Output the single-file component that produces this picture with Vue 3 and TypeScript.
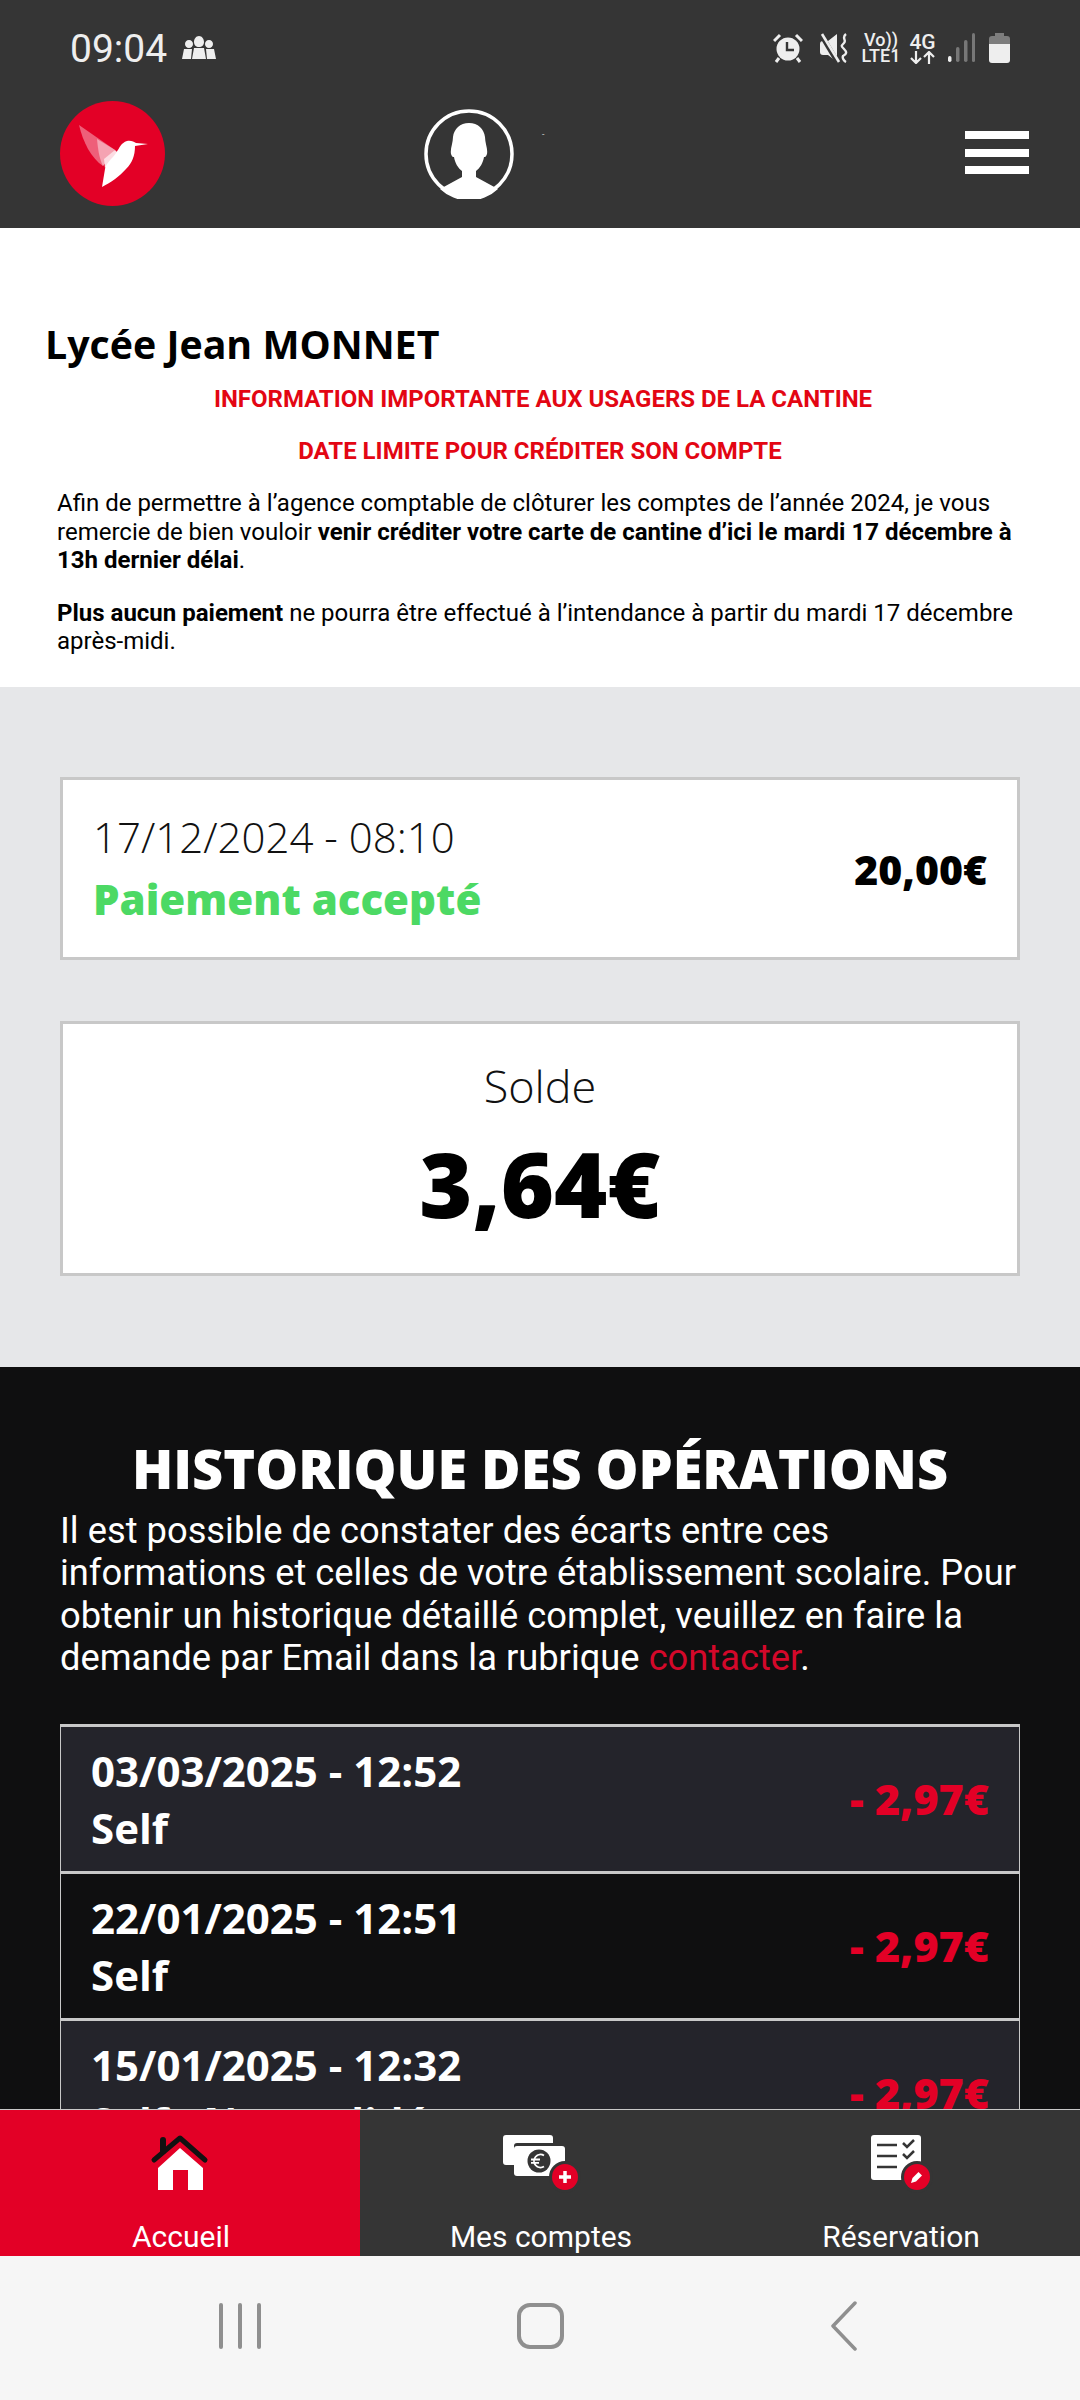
<script setup lang="ts">
const operations = [
  { date: '03/03/2025 - 12:52', label: 'Self', amount: '- 2,97€' },
  { date: '22/01/2025 - 12:51', label: 'Self', amount: '- 2,97€' },
  { date: '15/01/2025 - 12:32', label: 'Self - Non validé', amount: '- 2,97€' },
]
</script>

<template>
  <div class="screen">
    <header class="top">
      <div class="status">
        <div class="status-left">
          <span class="clock">09:04</span>
          <svg viewBox="0 0 36 24" width="36" height="24">
            <path d="M18 0c3 0 5 3 5 6s-2 5-5 5-5-2-5-5 2-6 5-6zM8 4c2.500 0 4 2 4 4s-1.500 4-4 4-4-2-4-4 1.500-4 4-4zM28 4c2.500 0 4 2 4 4s-1.500 4-4 4-4-2-4-4 1.500-4 4-4z" fill="#eee" />
            <path d="M13 12h10l2 11H11zM3 13h8l-1 10H1zM25 13h8l2 10h-9z" fill="#eee" />
          </svg>
        </div>
        <div class="status-right">
          <svg viewBox="0 0 30 30" width="30" height="30">
            <circle cx="15" cy="16" r="11.500" fill="#eee" />
            <path d="M14 9v8h7" fill="none" stroke="#353535" stroke-width="2.400" />
            <path d="M1 8l6-6M29 8l-6-6M6 25l-3 4M24 25l3 4" stroke="#eee" stroke-width="3" />
          </svg>
          <svg class="mute" viewBox="0 0 28 30" width="28" height="30">
            <path d="M0 11c0-2 1-3 3-3h5l9-7v28l-9-7H3c-2 0-3-1-3-3z" fill="#eee" />
            <path d="M0 0l18 30" stroke="#353535" stroke-width="5" />
            <path d="M2 1l17 28" stroke="#eee" stroke-width="2.600" />
            <path d="M26 1c-5 4 1 6-2 9s-3 3 0 6 3 5-1 7c-1 2 1 5 3 6" fill="none" stroke="#eee" stroke-width="2.400" />
          </svg>
          <div class="net">
            <span>Vo))</span>
            <span>LTE1</span>
          </div>
          <div class="net net-4g">
            <span>4G</span>
            <svg viewBox="0 0 25 13" width="25" height="13">
              <path d="M6 0v12M1 7l5 5 5-5M19 13V1M14 6l5-5 5 5" fill="none" stroke="#eee" stroke-width="2.200" />
            </svg>
          </div>
          <svg class="signal" viewBox="0 0 28 30" width="28" height="30">
            <rect x="1" y="23" width="3.500" height="6" rx="1.700" fill="#eee" />
            <rect x="9" y="14" width="3.500" height="15" rx="1.700" fill="#777" />
            <rect x="17" y="7" width="3.500" height="22" rx="1.700" fill="#777" />
            <rect x="25" y="0" width="3" height="29" rx="1.500" fill="#777" />
          </svg>
          <svg viewBox="0 0 21 30" width="21" height="30">
            <path d="M6 0h9v3h3a3 3 0 0 1 3 3v5H0V6a3 3 0 0 1 3-3h3z" fill="#7d7d7d" />
            <path d="M0 11h21v16a3 3 0 0 1-3 3H3a3 3 0 0 1-3-3z" fill="#eee" />
          </svg>
        </div>
      </div>

      <div class="brand-row">
        <svg class="logo" viewBox="0 0 105 105" width="105" height="105">
          <circle cx="52.500" cy="52.500" r="52.500" fill="#e30026" />
          <path d="M19 24l36 25-12 16C31 57 23 41 19 24z" fill="#ee5f79" />
          <path d="M37 38l18 11-12 16c-4-8-5-17-6-27z" fill="#f5a3b2" />
          <path d="M44 58l11-9 4 4-14 14z" fill="#fcdde3" />
          <path d="M42 86l3-18c1-6 7-10 11-16 4-6 5-10 11-12 4-1 7 1 9 2l12 1-13 2c0 10-3 17-9 23-6 7-16 14-24 18z" fill="#fff" />
        </svg>
        <div class="user">
          <svg class="avatar" viewBox="0 0 90 90" width="90" height="90">
            <circle cx="45" cy="45" r="43" fill="#353535" stroke="#fff" stroke-width="3.500" />
            <path d="M45 14c-9 0-15 6-16 14 0 6-3 12-2 17 1 3 2 3 3 3 1 6 4 11 8 14v6L16 80a42 42 0 0 0 58 0L52 68v-6c4-3 7-8 8-14 1 0 2 0 3-3 1-5-2-11-2-17-1-8-7-14-16-14z" fill="#fff" />
          </svg>
          <span class="user-dot">-</span>
        </div>
        <button class="burger" type="button" aria-label="Menu">
          <span></span>
          <span></span>
          <span></span>
        </button>
      </div>
    </header>

    <main class="scroll">
      <section class="notice">
        <h1>Lycée Jean MONNET</h1>
        <p class="alert">INFORMATION IMPORTANTE AUX USAGERS DE LA CANTINE</p>
        <p class="alert">DATE LIMITE POUR CRÉDITER SON COMPTE</p>
        <p class="body-text">
          Afin de permettre à l’agence comptable de clôturer les comptes de l’année 2024, je vous
          remercie de bien vouloir
          <strong>venir créditer votre carte de cantine d’ici le mardi 17 décembre à 13h dernier délai</strong>.
        </p>
        <p class="body-text">
          <strong>Plus aucun paiement</strong> ne pourra être effectué à l’intendance à partir du
          mardi 17 décembre après-midi.
        </p>
      </section>

      <section class="account">
        <div class="card payment">
          <div>
            <div class="pay-date">17/12/2024 - 08:10</div>
            <div class="pay-status">Paiement accepté</div>
          </div>
          <div class="pay-amount">20,00€</div>
        </div>
        <div class="card balance">
          <div class="balance-label">Solde</div>
          <div class="balance-value">3,64€</div>
        </div>
      </section>

      <section class="history">
        <h2>HISTORIQUE DES OPÉRATIONS</h2>
        <p class="history-text">
          Il est possible de constater des écarts entre ces informations et celles de votre
          établissement scolaire. Pour obtenir un historique détaillé complet, veuillez en faire la
          demande par Email dans la rubrique <span class="link">contacter</span>.
        </p>
        <div class="ops">
          <div v-for="op in operations" :key="op.date" class="op">
            <div class="op-main">
              <div>{{ op.date }}</div>
              <div>{{ op.label }}</div>
            </div>
            <div class="op-amount">{{ op.amount }}</div>
          </div>
        </div>
      </section>
    </main>

    <nav class="tabs">
      <div class="tab active">
        <svg viewBox="0 0 64 60" width="64" height="60">
          <path d="M10 57V35L32 15l23 20v22H40V37H25v20z" fill="#fff" />
          <path d="M6 27L32 5l25 22" fill="none" stroke="#111" stroke-width="5" stroke-linecap="round" stroke-linejoin="round" />
          <path d="M15 7v11" stroke="#111" stroke-width="6" stroke-linecap="round" />
        </svg>
        <span>Accueil</span>
      </div>
      <div class="tab">
        <svg class="icon-money" viewBox="0 0 78 60" width="78" height="60">
          <path d="M3 2h44a3 3 0 0 1 3 3v5H14a3 3 0 0 0-3 3v19H3a3 3 0 0 1-3-3V5a3 3 0 0 1 3-3z" fill="#fff" />
          <rect x="11" y="13" width="51" height="30" rx="3" fill="#fff" />
          <circle cx="36" cy="28" r="11.500" fill="#353535" />
          <path d="M41 22.500a6.500 6.500 0 1 0 0 11M28 26.500h9M28 29.800h8" fill="none" stroke="#fff" stroke-width="1.800" />
          <circle cx="62" cy="44" r="16" fill="#353535" />
          <circle cx="62" cy="44" r="13" fill="#e30026" />
          <path d="M62 38v12M56 44h12" stroke="#fff" stroke-width="3.500" />
        </svg>
        <span>Mes comptes</span>
      </div>
      <div class="tab">
        <svg class="icon-booking" viewBox="0 0 62 60" width="62" height="60">
          <rect x="0" y="2" width="50" height="45" rx="3" fill="#fff" />
          <path d="M6 12h20M6 23h20M6 34h20" stroke="#353535" stroke-width="2.500" />
          <path d="M32 10l4 4 7-7M32 21l4 4 7-7" fill="none" stroke="#353535" stroke-width="2.500" />
          <circle cx="46" cy="44" r="16" fill="#353535" />
          <circle cx="46" cy="44" r="13" fill="#e30026" />
          <path d="M40 50l1.500-5 6-6 3.500 3.500-6 6z" fill="#fff" />
        </svg>
        <span>Réservation</span>
      </div>
    </nav>

    <footer class="android">
      <div class="recents">
        <span></span>
        <span></span>
        <span></span>
      </div>
      <div class="home"></div>
      <svg class="back" viewBox="0 0 28 50" width="28" height="50">
        <path d="M25 2L3 25l22 23" fill="none" stroke="#8f8f8f" stroke-width="3.500" stroke-linecap="round" stroke-linejoin="round" />
      </svg>
    </footer>
  </div>
</template>

<style>
html,
body {
  margin: 0;
  background: #fff;
}
</style>

<style scoped>
.screen {
  width: 1080px;
  height: 2400px;
  display: flex;
  flex-direction: column;
  overflow: hidden;
  font-family: Roboto, "Liberation Sans", sans-serif;
}
.top {
  height: 228px;
  flex: none;
  background: #353535;
  display: flex;
  flex-direction: column;
}
.status {
  height: 96px;
  padding: 0 70px;
  display: flex;
  align-items: center;
  justify-content: space-between;
  color: #eee;
}
.status-left {
  display: flex;
  align-items: center;
  gap: 14px;
}
.clock {
  padding-top: 2px;
  font-size: 39px;
}
.status-right {
  display: flex;
  align-items: center;
  gap: 14px;
}
.mute {
  margin-left: 3px;
}
.net {
  width: 38px;
  display: flex;
  flex-direction: column;
  align-items: center;
  font-size: 18px;
  font-weight: 500;
  line-height: 16px;
}
.net-4g {
  width: 25px;
  margin-left: -4px;
  font-size: 21px;
  line-height: 18px;
}
.signal {
  margin-left: -2px;
}
.brand-row {
  flex: 1;
  display: flex;
  align-items: flex-start;
  padding: 5px 51px 0 60px;
}
.logo {
  flex: none;
}
.user {
  display: flex;
  align-items: flex-start;
  margin-left: 259px;
  margin-top: 8px;
}
.avatar {
  flex: none;
}
.user-dot {
  color: #ccc;
  font-size: 9px;
  margin: 20px 0 0 28px;
}
.burger {
  margin-left: auto;
  margin-top: 30px;
  width: 64px;
  padding: 0;
  border: 0;
  background: none;
  display: flex;
  flex-direction: column;
  gap: 9.500px;
}
.burger span {
  display: block;
  height: 8px;
  background: #fff;
}
.scroll {
  flex: 1;
  min-height: 0;
  overflow: hidden;
}
.notice {
  height: 459px;
  box-sizing: border-box;
  padding: 93px 28px 0 46px;
  background: #fff;
  color: #000;
}
.notice h1 {
  margin: 0 0 0 -1px;
  font-family: "Open Sans", sans-serif;
  font-size: 39.300px;
  line-height: 46px;
  font-weight: 700;
}
.alert {
  margin: 0 0 24px;
  padding-right: 12px;
  color: #e30613;
  font-size: 24px;
  font-weight: 700;
  line-height: 28px;
  text-align: center;
}
.notice h1 + .alert {
  margin-top: 18px;
}
.alert + .alert {
  padding-right: 18px;
}
.body-text {
  margin: 0 0 24px 11px;
  font-size: 24px;
  line-height: 28.500px;
}
.account {
  height: 680px;
  box-sizing: border-box;
  padding: 90px 60px 0;
  background: #e6e7e9;
}
.card {
  box-sizing: border-box;
  background: #fff;
  border: 3px solid #c8c8c8;
}
.payment {
  height: 183px;
  padding: 0 30px;
  display: flex;
  align-items: center;
  justify-content: space-between;
}
.pay-date {
  font-family: "Open Sans", sans-serif;
  font-weight: 300;
  font-size: 42px;
  line-height: 56px;
  color: #111;
}
.pay-status {
  margin-top: 5px;
  font-family: "Open Sans", sans-serif;
  font-weight: 800;
  font-size: 42px;
  line-height: 58px;
  color: #4cd964;
}
.pay-amount {
  font-family: "Open Sans", sans-serif;
  font-weight: 800;
  font-size: 41px;
  color: #000;
}
.balance {
  height: 255px;
  margin-top: 61px;
  text-align: center;
}
.balance-label {
  padding-top: 31px;
  font-family: "Open Sans", sans-serif;
  font-weight: 300;
  font-size: 45px;
  line-height: 62px;
  color: #111;
}
.balance-value {
  margin-top: 14px;
  font-family: "Open Sans", sans-serif;
  font-weight: 800;
  font-size: 91px;
  line-height: 104px;
  color: #000;
}
.history {
  padding: 69px 60px 0;
  background: #0f0f10;
  color: #fff;
}
.history h2 {
  margin: 0;
  font-family: "Open Sans", sans-serif;
  font-weight: 800;
  font-size: 54px;
  line-height: 64px;
  text-align: center;
}
.history-text {
  margin: 0;
  padding-top: 10px;
  font-size: 36.300px;
  line-height: 42.400px;
}
.link {
  color: #d4082a;
}
.ops {
  margin-top: 44px;
  border-top: 3px solid #c8c8c8;
}
.op {
  box-sizing: border-box;
  height: 147px;
  padding: 0 30px;
  display: flex;
  align-items: center;
  justify-content: space-between;
  border: 1px solid #c8c8c8;
  border-top: 0;
  border-bottom: 3px solid #c8c8c8;
  background: #0f0f10;
}
.op:nth-child(odd) {
  background: #24242b;
}
.op-main {
  font-family: "Open Sans", sans-serif;
  font-weight: 700;
  font-size: 42px;
  line-height: 57px;
  color: #fff;
}
.op-amount {
  font-family: "Open Sans", sans-serif;
  font-weight: 800;
  font-size: 43px;
  color: #e30026;
}
.tabs {
  flex: none;
  height: 147px;
  box-sizing: border-box;
  border-top: 1px solid #c8c8c8;
  background: #353535;
  display: grid;
  grid-template-columns: repeat(3, 360px);
}
.tab {
  display: flex;
  flex-direction: column;
  align-items: center;
  padding-top: 23px;
  color: #fff;
  font-size: 30px;
}
.tab svg {
  height: 60px;
}
.icon-money,
.icon-booking {
  margin-left: 4px;
}
.tab span {
  margin: 28px 0 0 2px;
  line-height: 32px;
}
.tab.active {
  background: #e30026;
}
.android {
  flex: none;
  height: 144px;
  box-sizing: border-box;
  padding-bottom: 4px;
  background: #f6f6f6;
  display: grid;
  grid-template-columns: repeat(3, 300px);
  justify-content: center;
  justify-items: center;
  align-items: center;
}
.recents {
  display: flex;
  gap: 15px;
}
.recents span {
  width: 4px;
  height: 46px;
  border-radius: 2px;
  background: #8f8f8f;
}
.home {
  width: 39px;
  height: 38px;
  border: 4px solid #8f8f8f;
  border-radius: 13px;
}
.back {
  margin-left: 8px;
}
</style>
